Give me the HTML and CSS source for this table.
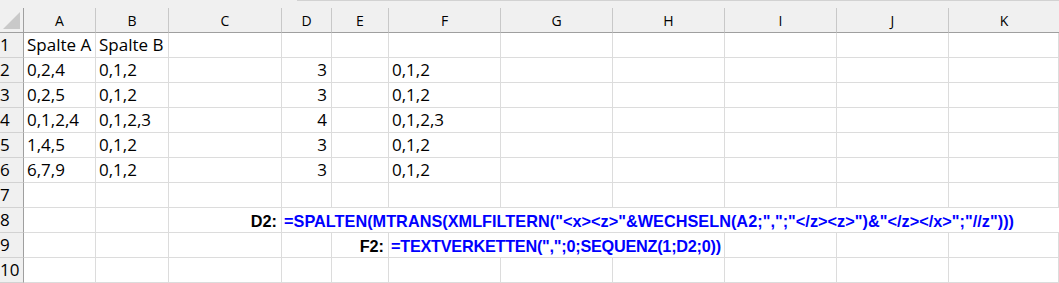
FILE: index.html
```html
<!DOCTYPE html>
<html>
<head>
<meta charset="utf-8">
<link rel="stylesheet" href="styles.css">
</head>
<body>
<div class="sheet">
  <div class="top"><div class="topline"></div></div>

  <div class="corner"><svg width="24" height="24" viewBox="0 0 24 24"><polygon points="20,4 20,21 3,21" fill="#c9c9c9"/></svg></div>
  <div class="ch">A</div><div class="ch">B</div><div class="ch">C</div><div class="ch">D</div><div class="ch">E</div><div class="ch">F</div><div class="ch">G</div><div class="ch">H</div><div class="ch">I</div><div class="ch">J</div><div class="ch last">K</div>

  <div class="rh">1</div><div class="c">Spalte A</div><div class="c">Spalte B</div><div class="c"></div><div class="c"></div><div class="c"></div><div class="c"></div><div class="c"></div><div class="c"></div><div class="c"></div><div class="c"></div><div class="c"></div>

  <div class="rh">2</div><div class="c">0,2,4</div><div class="c">0,1,2</div><div class="c"></div><div class="c num">3</div><div class="c"></div><div class="c">0,1,2</div><div class="c"></div><div class="c"></div><div class="c"></div><div class="c"></div><div class="c"></div>

  <div class="rh">3</div><div class="c">0,2,5</div><div class="c">0,1,2</div><div class="c"></div><div class="c num">3</div><div class="c"></div><div class="c">0,1,2</div><div class="c"></div><div class="c"></div><div class="c"></div><div class="c"></div><div class="c"></div>

  <div class="rh">4</div><div class="c">0,1,2,4</div><div class="c">0,1,2,3</div><div class="c"></div><div class="c num">4</div><div class="c"></div><div class="c">0,1,2,3</div><div class="c"></div><div class="c"></div><div class="c"></div><div class="c"></div><div class="c"></div>

  <div class="rh">5</div><div class="c">1,4,5</div><div class="c">0,1,2</div><div class="c"></div><div class="c num">3</div><div class="c"></div><div class="c">0,1,2</div><div class="c"></div><div class="c"></div><div class="c"></div><div class="c"></div><div class="c"></div>

  <div class="rh">6</div><div class="c">6,7,9</div><div class="c">0,1,2</div><div class="c"></div><div class="c num">3</div><div class="c"></div><div class="c">0,1,2</div><div class="c"></div><div class="c"></div><div class="c"></div><div class="c"></div><div class="c"></div>

  <div class="rh">7</div><div class="c"></div><div class="c"></div><div class="c"></div><div class="c"></div><div class="c"></div><div class="c"></div><div class="c"></div><div class="c"></div><div class="c"></div><div class="c"></div><div class="c"></div>

  <div class="rh">8</div><div class="c"></div><div class="c"></div><div class="c lbl">D2:</div><div class="c f span8">=SPALTEN(MTRANS(XMLFILTERN("&lt;x&gt;&lt;z&gt;"&amp;WECHSELN(A2;",";"&lt;/z&gt;&lt;z&gt;")&amp;"&lt;/z&gt;&lt;/x&gt;";"//z")))</div>

  <div class="rh">9</div><div class="c"></div><div class="c"></div><div class="c"></div><div class="c"></div><div class="c lbl">F2:</div><div class="c f span3">=TEXTVERKETTEN(",";0;SEQUENZ(1;D2;0))</div><div class="c"></div><div class="c"></div><div class="c"></div>

  <div class="rh">10</div><div class="c"></div><div class="c"></div><div class="c"></div><div class="c"></div><div class="c"></div><div class="c"></div><div class="c"></div><div class="c"></div><div class="c"></div><div class="c"></div><div class="c"></div>
</div>
</body>
</html>
```

FILE: styles.css
```css
html, body {
  margin: 0;
  padding: 0;
  background: #ffffff;
}

.sheet {
  width: 1059px;
  height: 283px;
  overflow: hidden;
  display: grid;
  grid-template-columns: 24px 72px 73px 113px 50px 57px 112px 112px 112px 112px 112px 1fr;
  grid-template-rows: 8px repeat(11, 25px);
  font-family: "Open Sans", "Liberation Sans", sans-serif;
  color: #000;
}

.top {
  grid-column: 1 / -1;
  background: #f0f0f0;
}

.topline {
  margin-left: 297px;
  border-top: 1px solid #d2d2d2;
}

.corner {
  background: #f0f0f0;
  border-right: 1px solid #9f9f9f;
  border-bottom: 1px solid #9f9f9f;
  box-sizing: border-box;
}

.corner svg {
  display: block;
}

.ch {
  background: #f0f0f0;
  border-right: 1px solid #c8c8c8;
  border-bottom: 1px solid #9f9f9f;
  box-sizing: border-box;
  text-align: center;
  font-size: 14px;
  line-height: 24px;
  padding-top: 1px;
}

.ch.last {
  border-right: none;
}

.rh {
  background: #f0f0f0;
  border-right: 1px solid #9f9f9f;
  border-bottom: 1px solid #d2d2d2;
  box-sizing: border-box;
  font-size: 17px;
  line-height: 24px;
  padding-left: 0;
  white-space: nowrap;
  overflow: hidden;
}

.c {
  border-right: 1px solid #dcdcdc;
  border-bottom: 1px solid #dcdcdc;
  box-sizing: border-box;
  font-size: 17px;
  line-height: 24px;
  padding: 0 3px;
  white-space: nowrap;
  overflow: hidden;
}

.num {
  text-align: right;
  padding-right: 4px;
}

.lbl {
  text-align: right;
  padding-right: 4px;
  padding-top: 1px;
  font-family: "Liberation Sans", Arial, sans-serif;
  font-weight: bold;
  font-size: 16.25px;
}

.f {
  padding-top: 1px;
  padding-left: 2px;
  font-family: "Liberation Sans", Arial, sans-serif;
  font-weight: bold;
  font-size: 16.25px;
  color: #0000ff;
  overflow: visible;
}

.span8 {
  grid-column: span 8;
  border-right: none;
  letter-spacing: 0.03px;
}

.span3 {
  grid-column: span 3;
  letter-spacing: -0.25px;
}
```
